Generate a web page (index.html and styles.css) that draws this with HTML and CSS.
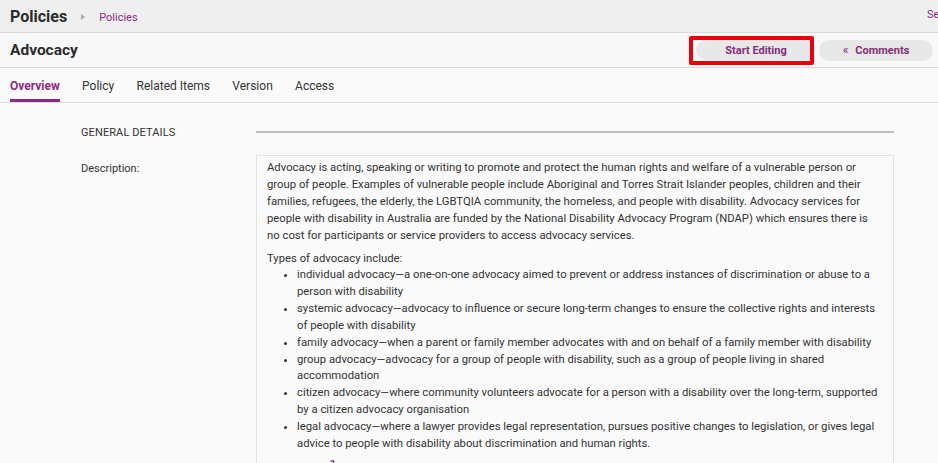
FILE: index.html
```html
<!DOCTYPE html>
<html lang="en">
<head>
<meta charset="utf-8">
<title>Advocacy - Policies</title>
<link rel="stylesheet" href="styles.css">
</head>
<body>
<div class="page">
  <header class="topbar">
    <div class="crumbs">
      <span class="app-title">Policies</span>
      <span class="crumb-arrow"></span>
      <a class="crumb-link" href="#">Policies</a>
    </div>
    <a class="top-right" href="#">Se</a>
  </header>
  <div class="titlebar">
    <h1 class="doc-title">Advocacy</h1>
    <div class="actions">
      <div class="highlight">
        <button class="pill">Start Editing</button>
      </div>
      <button class="pill pill-comments"><span class="chev">&laquo;</span>Comments</button>
    </div>
  </div>
  <nav class="tabs">
    <a class="tab active" href="#">Overview</a>
    <a class="tab" href="#">Policy</a>
    <a class="tab" href="#">Related Items</a>
    <a class="tab" href="#">Version</a>
    <a class="tab" href="#">Access</a>
  </nav>
  <main class="content">
    <div class="section-row">
      <div class="section-title">GENERAL DETAILS</div>
      <div class="section-rule"></div>
    </div>
    <div class="field-row">
      <div class="field-label">Description:</div>
      <div class="field-box">
        <p>Advocacy is acting, speaking or writing to promote and protect the human rights and welfare of a vulnerable person or group of people. Examples of vulnerable people include Aboriginal and Torres Strait Islander peoples, children and their families, refugees, the elderly, the LGBTQIA community, the homeless, and people with disability. Advocacy services for people with disability in Australia are funded by the National Disability Advocacy Program (NDAP) which ensures there is no cost for participants or service providers to access advocacy services.</p>
        <p class="list-intro">Types of advocacy include:</p>
        <ul>
          <li>individual advocacy—a one-on-one advocacy aimed to prevent or address instances of discrimination or abuse to a person with disability</li>
          <li>systemic advocacy—advocacy to influence or secure long-term changes to ensure the collective rights and interests of people with disability</li>
          <li>family advocacy—when a parent or family member advocates with and on behalf of a family member with disability</li>
          <li>group advocacy—advocacy for a group of people with disability, such as a group of people living in shared accommodation</li>
          <li>citizen advocacy—where community volunteers advocate for a person with a disability over the long-term, supported by a citizen advocacy organisation</li>
          <li>legal advocacy—where a lawyer provides legal representation, pursues positive changes to legislation, or gives legal advice to people with disability about discrimination and human rights.</li>
        </ul>
        <p class="more">Learn more<sup class="q">?</sup></p>
      </div>
    </div>
  </main>
</div>
</body>
</html>
```
FILE: styles.css
```css
* { box-sizing: border-box; }
html, body { margin: 0; padding: 0; }
body {
  font-family: Roboto, "Liberation Sans", sans-serif;
  color: #333;
  background: #fafafa;
  width: 938px;
  height: 463px;
  overflow: hidden;
}
.page { width: 938px; }

.topbar {
  height: 33px;
  background: #efefef;
  border-bottom: 1px solid #d9d9d9;
  display: flex;
  align-items: center;
  justify-content: space-between;
  padding: 0 0 0 10px;
}
.crumbs { display: flex; align-items: center; }
.app-title {
  font-size: 16px;
  font-weight: 700;
  color: #2b2b2b;
}
.crumb-arrow {
  width: 0; height: 0;
  border-top: 3px solid transparent;
  border-bottom: 3px solid transparent;
  border-left: 4px solid #aaa;
  margin: 1px 14px 0 14px;
}
.crumb-link {
  font-size: 11px;
  color: #8e2b7f;
  text-decoration: none;
  margin-top: 2px;
}
.top-right {
  font-size: 11px;
  color: #8e2b7f;
  text-decoration: none;
  width: 11px;
  overflow: hidden;
  white-space: nowrap;
  margin-top: -3px;
}

.titlebar {
  height: 35px;
  background: #f8f8f8;
  border-bottom: 1px solid #d9d9d9;
  display: flex;
  align-items: center;
  justify-content: space-between;
  padding: 0 5px 0 10px;
}
.doc-title {
  margin: 0;
  font-size: 15.5px;
  font-weight: 700;
  color: #2b2b2b;
}
.actions { display: flex; align-items: center; gap: 5px; }
.highlight {
  border: 4px solid #e8000b;
  border-radius: 2px;
  height: 29px;
  width: 125px;
  padding: 0 0 0 3px;
  display: flex;
  align-items: center;
  overflow: hidden;
}
.pill {
  font-family: Roboto, "Liberation Sans", sans-serif;
  font-size: 11px;
  font-weight: 700;
  color: #8a2b7b;
  background: #e8e8e8;
  border: none;
  border-radius: 11px;
  height: 20px;
  padding: 0;
  width: 120px;
  flex-shrink: 0;
}
.pill-comments {
  width: 114px;
  height: 21px;
}
.chev { font-weight: 400; margin-right: 7px; font-size: 12px; }

.tabs {
  height: 35px;
  border-bottom: 1px solid #dcdcdc;
  display: flex;
  align-items: stretch;
  padding-left: 10px;
  gap: 22.3px;
}
.tab {
  font-size: 12px;
  color: #333;
  text-decoration: none;
  display: flex;
  align-items: center;
  padding-top: 5px;
  border-bottom: 3px solid transparent;
}
.tab.active {
  color: #8e2b7f;
  font-weight: 700;
  border-bottom-color: #8e2b7f;
}

.content {
  padding: 18px 44px 0 81px;
}
.section-row {
  display: grid;
  grid-template-columns: 175px 638px;
  align-items: center;
  height: 23px;
}
.section-title {
  font-size: 11px;
  color: #333;
  letter-spacing: 0.1px;
}
.section-rule {
  height: 2px;
  background: #c0c0c0;
  margin-top: -1px;
}
.field-row {
  display: grid;
  grid-template-columns: 175px 638px;
  margin-top: 11px;
}
.field-label {
  font-size: 11px;
  color: #333;
  padding-top: 7px;
}
.field-box {
  border: 1px solid #e2e2e2;
  border-bottom: none;
  padding: 3px 10px 10px 10px;
  font-size: 11.3px;
  line-height: 17px;
  color: #333;
  height: 320px;
}
.field-box p { margin: 0; }
.list-intro { margin-top: 6px !important; }
.field-box ul {
  margin: 0;
  padding-left: 30px;
}
.field-box li { padding-left: 0; line-height: 16.9px; }
.more { margin-top: 3px !important; }
.q {
  color: #8e2b7f;
  font-weight: 700;
  font-size: 9px;
  margin-left: 6px;
}
```
